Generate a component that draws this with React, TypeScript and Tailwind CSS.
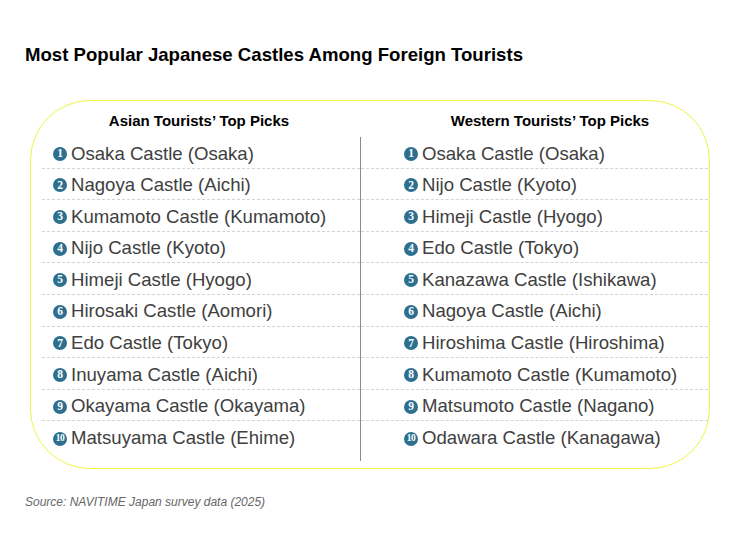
import React from "react";

const asian = [
  "Osaka Castle (Osaka)",
  "Nagoya Castle (Aichi)",
  "Kumamoto Castle (Kumamoto)",
  "Nijo Castle (Kyoto)",
  "Himeji Castle (Hyogo)",
  "Hirosaki Castle (Aomori)",
  "Edo Castle (Tokyo)",
  "Inuyama Castle (Aichi)",
  "Okayama Castle (Okayama)",
  "Matsuyama Castle (Ehime)",
];

const western = [
  "Osaka Castle (Osaka)",
  "Nijo Castle (Kyoto)",
  "Himeji Castle (Hyogo)",
  "Edo Castle (Tokyo)",
  "Kanazawa Castle (Ishikawa)",
  "Nagoya Castle (Aichi)",
  "Hiroshima Castle (Hiroshima)",
  "Kumamoto Castle (Kumamoto)",
  "Matsumoto Castle (Nagano)",
  "Odawara Castle (Kanagawa)",
];

function Bullet({ n }: { n: number }) {
  return (
    <span className="flex h-[14px] w-[14px] shrink-0 items-center justify-center rounded-full bg-[#2d6f8e] text-white font-bold leading-none [font-family:'Liberation_Serif',serif]">
      {n === 10 ? (
        <span className="text-[9.5px] tracking-[-0.6px]">10</span>
      ) : (
        <span className="text-[11.5px]">{n}</span>
      )}
    </span>
  );
}

function Column({ items, pad }: { items: string[]; pad: string }) {
  return (
    <div className="flex flex-col">
      {items.map((t, i) => (
        <div
          key={i}
          className={`flex h-[31.6px] items-center gap-[4px] pt-[3px] ${pad} ${
            i < items.length - 1 ? "border-b border-dashed border-[#d4d4d4]" : ""
          }`}
        >
          <Bullet n={i + 1} />
          <span className="text-[18.6px] leading-none text-[#404040] whitespace-nowrap">{t}</span>
        </div>
      ))}
    </div>
  );
}

export default function App() {
  return (
    <div className="relative h-[536px] w-[750px] overflow-hidden bg-white [font-family:'Liberation_Sans',Arial,sans-serif]">
      <div className="pl-[25px] pt-[44px] text-[18.6px] font-bold leading-[22px] text-black">
        Most Popular Japanese Castles Among Foreign Tourists
      </div>
      <div className="ml-[30px] mt-[34px] h-[369px] w-[680px] rounded-[60px] border border-[#eef542]">
        <div className="ml-[11px] grid grid-cols-[318px_348px]">
          <div className="flex h-[36px] items-center justify-center pr-[4px] pt-[4px] text-[15px] font-bold text-black">
            Asian Tourists’ Top Picks
          </div>
          <div className="flex h-[36px] items-center justify-center pl-[32px] pt-[4px] text-[15px] font-bold text-black">
            Western Tourists’ Top Picks
          </div>
          <div className="pb-[8px]">
            <Column items={asian} pad="pl-[11px]" />
          </div>
          <div className="border-l border-[#8a8a8a] pb-[8px]">
            <Column items={western} pad="pl-[43px]" />
          </div>
        </div>
      </div>
      <div className="mt-[26px] pl-[25px] text-[12px] italic leading-[14px] text-[#666]">
        Source: NAVITIME Japan survey data (2025)
      </div>
    </div>
  );
}
